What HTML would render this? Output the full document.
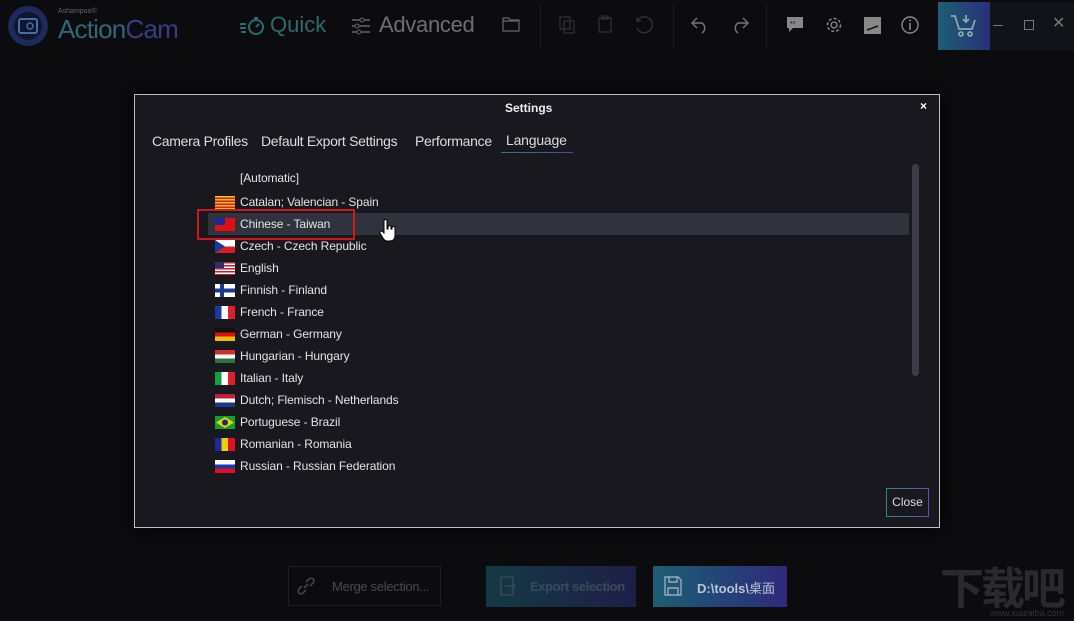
<!DOCTYPE html>
<html><head><meta charset="utf-8"><style>
*{margin:0;padding:0;box-sizing:border-box}
html,body{width:1074px;height:621px;overflow:hidden}
body{background:#0c0c0f;position:relative;font-family:"Liberation Sans","Noto Sans CJK SC",sans-serif;color:#ddd}
.a{position:absolute}
.t{font-size:12px;color:#e4e4e4;white-space:nowrap;letter-spacing:-0.1px}
.flag{position:absolute;left:215px;width:20px;height:13px;overflow:hidden}
</style></head><body>
<svg class="a" style="left:6px;top:4px" width="46" height="44"><circle cx="22" cy="22" r="20" fill="#1d2a5a"/><circle cx="22" cy="22" r="14" fill="#0f1630"/><rect x="13" y="15" width="18" height="14" rx="2" fill="none" stroke="#4c6da0" stroke-width="2"/><circle cx="24" cy="22" r="3" fill="none" stroke="#4c6da0" stroke-width="1.5"/></svg>
<div class="a" style="left:58px;top:8px;font-size:7px;color:#666">Ashampoo®</div>
<div class="a" style="left:58px;top:14px;font-size:26px;color:#2a6a78;letter-spacing:-0.8px">Action<span style="color:#3a3c80">Cam</span></div>
<svg class="a" style="left:238px;top:14px" width="30" height="24"><g stroke="#2b6b6f" stroke-width="2" fill="none"><circle cx="18" cy="13" r="7"/><path d="M18 13l3-3M16 4h4M2 10h6M2 14h6M3 18h5"/></g></svg>
<div class="a" style="left:270px;top:12px;font-size:22px;color:#2b6b6f">Quick</div>
<svg class="a" style="left:350px;top:16px" width="22" height="20"><g stroke="#666" stroke-width="1.5"><path d="M2 4h18M2 10h18M2 16h18"/></g><g fill="#0c0c0f" stroke="#666"><circle cx="12" cy="4" r="2"/><circle cx="7" cy="10" r="2"/><circle cx="9" cy="16" r="2"/></g></svg>
<div class="a" style="left:379px;top:12px;font-size:22px;color:#6e6e6e;letter-spacing:-0.3px">Advanced</div>
<svg class="a" style="left:502px;top:16px" width="18" height="16"><path d="M1 2h6l1 2h9v11H1z M1 5h16" fill="none" stroke="#666" stroke-width="1.2"/></svg>
<div class="a" style="left:540px;top:4px;width:1px;height:44px;background:#1c1c20"></div>
<svg class="a" style="left:559px;top:16px" width="18" height="18"><g fill="none" stroke="#333" stroke-width="1.2"><rect x="1" y="1" width="10" height="12"/><rect x="5" y="5" width="10" height="12"/></g></svg>
<svg class="a" style="left:597px;top:15px" width="16" height="19"><g fill="none" stroke="#333" stroke-width="1.2"><rect x="2" y="3" width="12" height="14"/><rect x="5" y="1" width="6" height="3"/></g></svg>
<svg class="a" style="left:633px;top:14px" width="22" height="22"><path d="M5 6a8 8 0 1 1-1 8M4 3v4h4" fill="none" stroke="#333" stroke-width="1.4"/></svg>
<div class="a" style="left:673px;top:4px;width:1px;height:44px;background:#1c1c20"></div>
<svg class="a" style="left:690px;top:16px" width="22" height="18"><path d="M7 2L2 7l5 5M2 7h10a6 6 0 0 1 0 10" fill="none" stroke="#777" stroke-width="1.4"/></svg>
<svg class="a" style="left:728px;top:16px" width="22" height="18"><path d="M15 2l5 5-5 5M20 7H10a6 6 0 0 0 0 10" fill="none" stroke="#777" stroke-width="1.4"/></svg>
<div class="a" style="left:766px;top:4px;width:1px;height:44px;background:#1c1c20"></div>
<svg class="a" style="left:786px;top:16px" width="18" height="18"><path d="M1 1h16v11H7l-4 4v-4H1z" fill="#888"/><text x="4" y="10" font-size="7" fill="#111">**</text></svg>
<svg class="a" style="left:824px;top:15px" width="20" height="20"><circle cx="10" cy="10" r="6.5" fill="none" stroke="#888" stroke-width="1.5" stroke-dasharray="3 2"/><circle cx="10" cy="10" r="3" fill="none" stroke="#888" stroke-width="1.3"/></svg>
<svg class="a" style="left:864px;top:17px" width="17" height="17"><rect width="17" height="17" fill="#888"/><path d="M3 13L14 9" stroke="#111" stroke-width="1.5"/></svg>
<svg class="a" style="left:900px;top:15px" width="20" height="20"><circle cx="10" cy="10" r="8" fill="none" stroke="#888" stroke-width="1.4"/><path d="M10 8v7" stroke="#888" stroke-width="1.6"/><circle cx="10" cy="5.5" r="1" fill="#888"/></svg>
<div class="a" style="left:938px;top:2px;width:52px;height:48px;background:linear-gradient(90deg,#1b5f74,#2a2f78)"></div>
<svg class="a" style="left:950px;top:13px" width="28" height="26"><g fill="none" stroke="#8aa" stroke-width="1.8"><path d="M1 3h4l4 13h13l3-9"/><path d="M16 2v7M13 6l3 3 3-3"/><circle cx="11" cy="21" r="2"/><circle cx="20" cy="21" r="2"/></g></svg>
<div class="a" style="left:990px;top:2px;width:84px;height:48px;background:#121318"></div>
<div class="a" style="left:993px;top:25px;width:10px;height:1px;background:#777"></div>
<div class="a" style="left:1024px;top:20px;width:10px;height:10px;border:1px solid #777"></div>
<div class="a" style="left:1052px;top:13px;font-size:16px;color:#777">✕</div>

<div class="a" style="left:288px;top:566px;width:153px;height:40px;border:1px solid #1e1e22"></div>
<svg class="a" style="left:296px;top:576px" width="20" height="20"><g fill="none" stroke="#444" stroke-width="1.6"><path d="M8 12l4-4M6 10l-3 3a2.5 2.5 0 0 0 4 4l3-3M14 10l3-3a2.5 2.5 0 0 0-4-4l-3 3"/></g></svg>
<div class="a" style="left:332px;top:579px;font-size:13px;color:#4a4a4a;letter-spacing:-0.3px">Merge selection...</div>
<div class="a" style="left:486px;top:566px;width:150px;height:41px;background:linear-gradient(90deg,#133a44,#1e1e48)"></div>
<div class="a" style="left:530px;top:579px;font-size:13px;font-weight:bold;color:#3a4a5a;letter-spacing:-0.4px">Export selection</div>
<svg class="a" style="left:500px;top:576px" width="18" height="20"><path d="M1 1h12v18H1zM5 10h10M12 7l3 3-3 3" fill="none" stroke="#3a4a5a" stroke-width="1.3"/></svg>
<div class="a" style="left:653px;top:566px;width:134px;height:41px;background:linear-gradient(90deg,#1b5f74,#2e2a7a)"></div>
<svg class="a" style="left:664px;top:576px" width="18" height="20"><path d="M1 1h13l3 3v15H1zM5 1v5h8V1M4 19v-7h10v7" fill="none" stroke="#9ab" stroke-width="1.4"/></svg>
<div class="a" style="left:697px;top:578px;font-size:13px;font-weight:bold;color:#b8c4d8;white-space:nowrap">D:\tools\<span style="font-weight:normal">桌面</span></div>
<div class="a" style="left:940px;top:560px;font-size:44px;line-height:50px;font-weight:bold;color:#2a2a2e;white-space:nowrap;letter-spacing:-3px;font-family:'Noto Sans CJK SC',sans-serif">下载吧</div>
<div class="a" style="left:990px;top:608px;font-size:9px;color:#333;white-space:nowrap">www.xiazaiba.com</div>

<div class="a" style="left:134px;top:94px;width:806px;height:434px;background:#18181e;border:1px solid #bdbdc2;box-shadow:0 0 20px #000"></div>
<div class="a" style="left:505px;top:101px;font-size:12px;font-weight:bold;color:#eee">Settings</div>
<div class="a" style="left:920px;top:99px;font-size:12px;font-weight:bold;color:#fff">×</div>
<div class="a" style="left:152px;top:133px;font-size:14px;color:#ddd;letter-spacing:-0.3px">Camera Profiles</div>
<div class="a" style="left:261px;top:133px;font-size:14px;color:#ddd;letter-spacing:-0.3px">Default Export Settings</div>
<div class="a" style="left:415px;top:133px;font-size:14px;color:#ddd;letter-spacing:-0.3px">Performance</div>
<div class="a" style="left:506px;top:132px;font-size:14px;color:#ddd;letter-spacing:-0.2px">Language</div>
<div class="a" style="left:501px;top:152px;width:72px;height:1px;background:linear-gradient(90deg,#2a7a80,#4a48a0)"></div>
<div class="a" style="left:912px;top:164px;width:7px;height:212px;border-radius:4px;background:#3a3d48"></div>
<div class="a" style="left:208px;top:213px;width:701px;height:22px;background:#30333d"></div>
<div class="a" style="left:197px;top:209px;width:158px;height:31px;border:2px solid #d01818"></div>

<div class="a t" style="left:240px;top:171px">[Automatic]</div>
<div class="flag" style="top:196px;background:repeating-linear-gradient(#f0c020 0 1.5px,#d0201a 1.5px 3px)"></div>
<div class="a t" style="left:240px;top:195px">Catalan; Valencian - Spain</div>
<div class="flag" style="top:218px;background:#e01010"><div style="width:10px;height:7px;background:#1a2a90"></div></div>
<div class="a t" style="left:240px;top:217px">Chinese - Taiwan</div>
<div class="flag" style="top:240px;background:linear-gradient(#fff 50%,#d02020 50%)"><svg width="20" height="13" style="display:block"><path d="M0 0L10 6.5 0 13z" fill="#1a3a9a"/></svg></div>
<div class="a t" style="left:240px;top:239px">Czech - Czech Republic</div>
<div class="flag" style="top:262px;background:repeating-linear-gradient(#c02030 0 1.5px,#fff 1.5px 3px)"><div style="width:9px;height:6px;background:#30306a"></div></div>
<div class="a t" style="left:240px;top:261px">English</div>
<div class="flag" style="top:284px;background:linear-gradient(#fff 4.5px,#1a3a8a 4.5px 8.5px,#fff 8.5px)"><div style="margin-left:5px;width:4px;height:13px;background:#1a3a8a"></div></div>
<div class="a t" style="left:240px;top:283px">Finnish - Finland</div>
<div class="flag" style="top:306px;background:linear-gradient(90deg,#1a3aa0 33%,#fff 33% 66%,#e02030 66%)"></div>
<div class="a t" style="left:240px;top:305px">French - France</div>
<div class="flag" style="top:328px;background:linear-gradient(#111 33%,#e01010 33% 66%,#f0c000 66%)"></div>
<div class="a t" style="left:240px;top:327px">German - Germany</div>
<div class="flag" style="top:350px;background:linear-gradient(#d03030 33%,#fff 33% 66%,#307040 66%)"></div>
<div class="a t" style="left:240px;top:349px">Hungarian - Hungary</div>
<div class="flag" style="top:372px;background:linear-gradient(90deg,#10a040 33%,#fff 33% 66%,#e02030 66%)"></div>
<div class="a t" style="left:240px;top:371px">Italian - Italy</div>
<div class="flag" style="top:394px;background:linear-gradient(#c02030 33%,#fff 33% 66%,#1a3a90 66%)"></div>
<div class="a t" style="left:240px;top:393px">Dutch; Flemisch - Netherlands</div>
<div class="flag" style="top:416px;background:#10a030"><svg width="20" height="13" style="display:block"><path d="M10 1L19 6.5 10 12 1 6.5z" fill="#f0d000"/><circle cx="10" cy="6.5" r="3" fill="#1a2a80"/></svg></div>
<div class="a t" style="left:240px;top:415px">Portuguese - Brazil</div>
<div class="flag" style="top:438px;background:linear-gradient(90deg,#1a2aa0 33%,#f0d000 33% 66%,#e01020 66%)"></div>
<div class="a t" style="left:240px;top:437px">Romanian - Romania</div>
<div class="flag" style="top:460px;background:linear-gradient(#fff 33%,#1a3ab0 33% 66%,#e01020 66%)"></div>
<div class="a t" style="left:240px;top:459px">Russian - Russian Federation</div>

<div class="a" style="left:886px;top:488px;width:43px;height:29px;border:1px solid;border-image:linear-gradient(90deg,#2a8a8a,#5a50b0) 1;font-size:12px;color:#ddd;text-align:center;line-height:27px">Close</div>
<svg class="a" style="left:378px;top:219px" width="20" height="24"><path d="M6 2a1.5 1.5 0 0 1 3 0v8h1V8a1.5 1.5 0 0 1 3 0v2h1V9a1.5 1.5 0 0 1 3 0v7c0 4-2 6-5 6H9c-2 0-3-1-4-3L2 14a1.5 1.5 0 0 1 2.5-1.5L6 14z" fill="#fff" stroke="#000" stroke-width="1"/></svg>
</body></html>
